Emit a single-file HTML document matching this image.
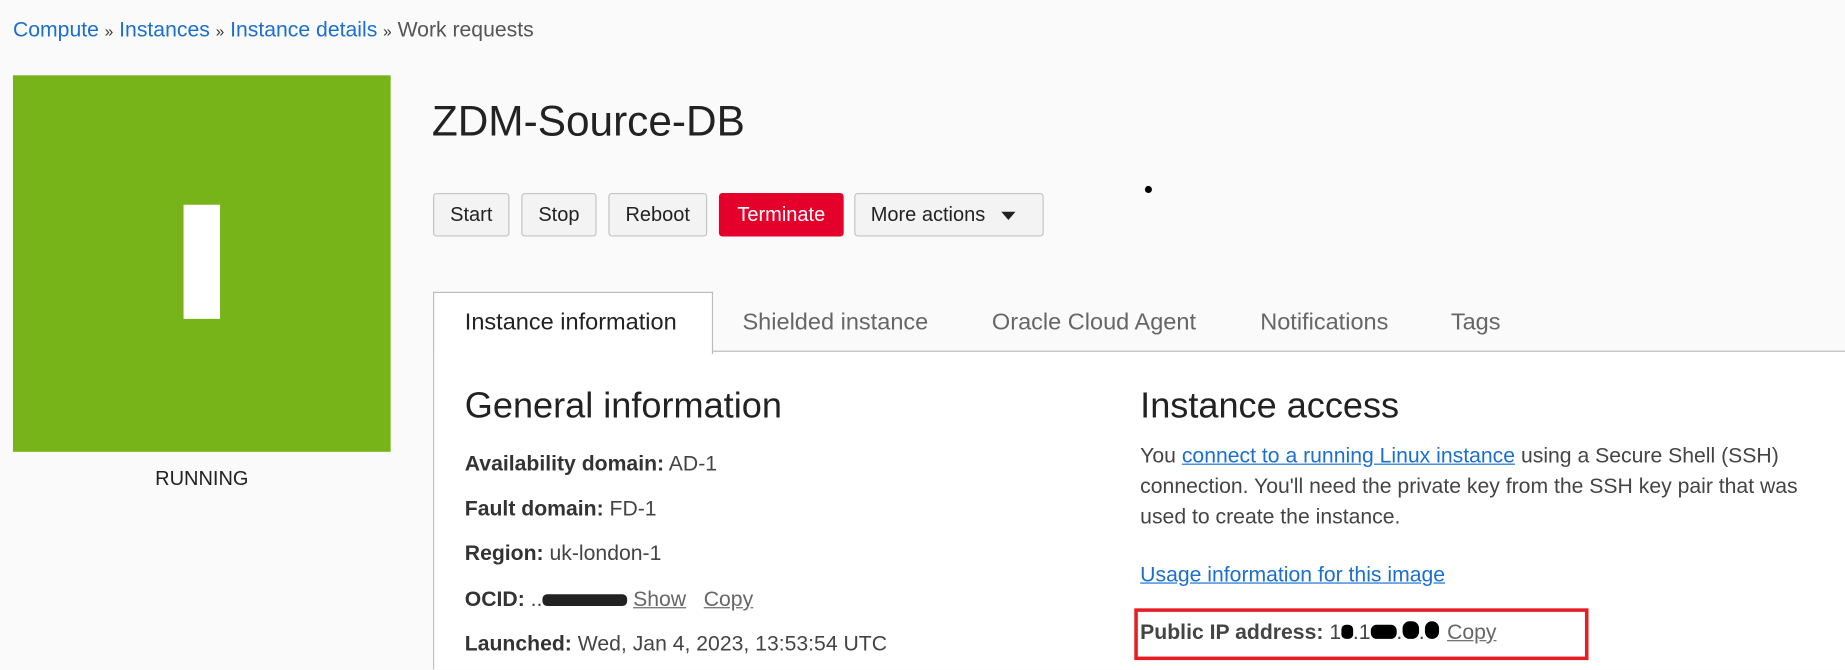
<!DOCTYPE html>
<html><head><meta charset="utf-8"><style>
html,body{margin:0;padding:0;width:1845px;height:664px;overflow:hidden;background:#fafafa;}
#w{position:absolute;left:0;top:0;width:1568px;height:564px;transform:scale(1.17666);transform-origin:0 0;font-family:"Liberation Sans",Arial,sans-serif;color:#333;}
.a{position:absolute;white-space:nowrap;}
.bc{top:15px;left:11px;font-size:18px;color:#555;}
.bc a{color:#1b6fce;text-decoration:none;}
.bc span{font-size:13px;color:#333;margin:0 5px;}
.btn{position:absolute;top:164px;height:37px;border:1px solid #c4c4c4;border-radius:3px;background:#f3f3f3;font-size:17px;line-height:36px;text-align:center;color:#222;box-sizing:border-box;}
.tab{position:absolute;top:263px;font-size:20px;color:#666;}
.row{position:absolute;left:395px;font-size:18px;color:#444;}
.row b{color:#333;}
.u{color:#666;text-decoration:underline;}
</style></head><body><div id="w">
<div class="a bc"><a>Compute</a><span>»</span><a>Instances</a><span>»</span><a>Instance details</a><span>»</span>Work requests</div>
<div class="a" style="left:11px;top:64px;width:321px;height:320px;background:#77b41a"></div>
<div class="a" style="left:156px;top:174px;width:31px;height:97px;background:#fff"></div>
<div class="a" style="left:11px;width:321px;text-align:center;top:397px;font-size:17px;color:#222">RUNNING</div>
<div class="a" style="left:367px;top:82px;font-size:36px;color:#222">ZDM-Source-DB</div>
<div class="btn" style="left:368px;width:65px">Start</div>
<div class="btn" style="left:443px;width:64px">Stop</div>
<div class="btn" style="left:517px;width:84px">Reboot</div>
<div class="btn" style="left:611px;width:106px;background:#e4002b;border-color:#e4002b;color:#fff">Terminate</div>
<div class="btn" style="left:726px;width:161px;text-align:left;padding-left:13px">More actions <span style="display:inline-block;margin-left:9px;width:0;height:0;border-left:6px solid transparent;border-right:6px solid transparent;border-top:7px solid #222;vertical-align:middle"></span></div>
<div class="a" style="left:973px;top:158px;width:6px;height:6px;border-radius:50%;background:#000"></div>
<div class="a" style="left:368px;top:299px;width:1200px;height:270px;background:#fff;border-left:1px solid #c0c0c0"></div>
<div class="a" style="left:604px;top:298px;width:964px;height:1px;background:#bbb"></div>
<div class="a" style="left:368px;top:248px;width:236px;height:52px;background:#fff;border:1px solid #bbb;border-bottom:none"></div>
<div class="tab" style="left:395px;color:#222">Instance information</div>
<div class="tab" style="left:631px">Shielded instance</div>
<div class="tab" style="left:843px">Oracle Cloud Agent</div>
<div class="tab" style="left:1071px">Notifications</div>
<div class="tab" style="left:1233px">Tags</div>
<div class="a" style="left:395px;top:327px;font-size:30.7px;color:#222">General information</div>
<div class="row" style="top:384px"><b>Availability domain:</b> AD-1</div>
<div class="row" style="top:422px"><b>Fault domain:</b> FD-1</div>
<div class="row" style="top:460px"><b>Region:</b> uk-london-1</div>
<div class="row" style="top:499px"><b>OCID:</b> ..<span style="display:inline-block;width:72px;height:10px;background:#222;border-radius:4px;vertical-align:middle"></span> <span class="u">Show</span>&nbsp;&nbsp; <span class="u">Copy</span></div>
<div class="row" style="top:537px"><b>Launched:</b> Wed, Jan 4, 2023, 13:53:54 UTC</div>
<div class="a" style="left:969px;top:327px;font-size:30.7px;color:#222">Instance access</div>
<div class="a" style="left:969px;top:374px;font-size:18px;line-height:26px;color:#444;white-space:normal;width:565px">You <a style="color:#1b6fce;text-decoration:underline">connect to a running Linux instance</a> using a Secure Shell (SSH) connection. You'll need the private key from the SSH key pair that was used to create the instance.</div>
<div class="a" style="left:969px;top:478px;font-size:18px;color:#1b6fce;text-decoration:underline">Usage information for this image</div>
<div class="a" style="left:964px;top:517px;width:380px;height:38px;border:3px solid #e81c24"></div>
<div class="a" style="left:969px;top:527px;font-size:18px;color:#444"><b>Public IP address:</b> 1<span style="display:inline-block;width:10px;height:12px;background:#000;border-radius:4px"></span>.1<span style="display:inline-block;width:22px;height:12px;background:#000;border-radius:5px"></span>.<span style="display:inline-block;width:14px;height:15px;background:#000;border-radius:6px"></span>.<span style="display:inline-block;width:12px;height:15px;background:#000;border-radius:6px"></span> <span class="u" style="margin-left:2px">Copy</span></div>
</div></body></html>
